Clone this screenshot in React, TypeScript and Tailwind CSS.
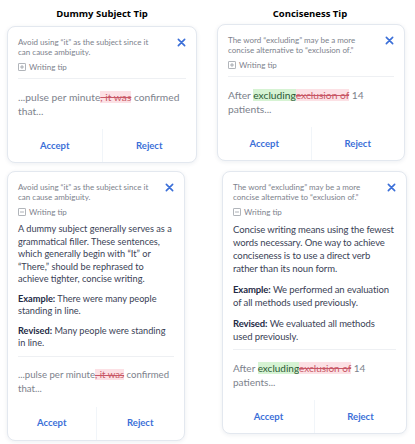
import React from 'react';

const font = { fontFamily: 'Lato, "Noto Sans", sans-serif' };

const CloseIcon: React.FC = () => (
    <svg viewBox="0 0 10 10" className="w-[9px] h-[9px] shrink-0 mt-[1px]" fill="none">
        <path d="M1.5 1.5 L8.5 8.5 M8.5 1.5 L1.5 8.5" stroke="#3b6fd8" strokeWidth="1.8" strokeLinecap="round" />
    </svg>
);

const TipBox: React.FC<{ open: boolean }> = ({ open }) => (
    <svg viewBox="0 0 9 9" className="w-[8px] h-[8px] shrink-0">
        <rect x="0.5" y="0.5" width="8" height="8" rx="0.8" fill="none" stroke="#8a8f98" strokeWidth="0.8" />
        <path d="M2.3 4.5 H6.7" stroke="#8a8f98" strokeWidth="0.8" />
        {!open && <path d="M4.5 2.3 V6.7" stroke="#8a8f98" strokeWidth="0.8" />}
    </svg>
);

const Buttons: React.FC = () => (
    <div className="flex h-[33px]">
        <button className="flex-1 text-[9.5px] font-bold text-[#3b6fd8] border-r border-slate-100">Accept</button>
        <button className="flex-1 text-[9.5px] font-bold text-[#3b6fd8]">Reject</button>
    </div>
);

const Del: React.FC<{ children: React.ReactNode }> = ({ children }) => (
    <span className="bg-[#fce1e5] text-[#c85766] line-through decoration-[#c85766]">{children}</span>
);

const Ins: React.FC<{ children: React.ReactNode }> = ({ children }) => (
    <span className="bg-[#d6f3d3] text-[#2a5a33]">{children}</span>
);

const TipCard: React.FC<{
    width: string;
    message: React.ReactNode;
    sentence: React.ReactNode;
    sentenceClass: string;
    detail?: React.ReactNode;
    detailClass?: string;
}> = ({ width, message, sentence, sentenceClass, detail, detailClass }) => (
    <div className={`${width} bg-white rounded-[8px] border border-[#e3e8ef] shadow-[0_1px_4px_rgba(30,50,90,0.08)]`}>
        <div className="px-[10px] pt-[10px]">
            <div className="flex items-start justify-between">
                <p className="max-w-[140px] text-[8px] leading-[10px] text-[#7d828c]">{message}</p>
                <CloseIcon />
            </div>
            <div className="flex items-center gap-[3px] mt-[5px] text-[8px] leading-[10px] text-[#7d828c]">
                <TipBox open={!!detail} />
                Writing tip
            </div>
            {detail && (
                <div className={`text-[#3a4256] ${detailClass}`}>
                    {detail}
                </div>
            )}
            <div className={`border-t border-[#eef0f3] mt-[6px] pt-[11px] pb-[11px] leading-[14px] text-[#7d828c] ${sentenceClass}`}>
                {sentence}
            </div>
        </div>
        <Buttons />
    </div>
);

const dummyMsg = <>Avoid using “it” as the subject since it can cause ambiguity.</>;
const dummySentence = <>...pulse per minute<Del>, it was</Del> confirmed that...</>;
const conciseMsg = <>The word “excluding” may be a more concise alternative to “exclusion of.”</>;
const conciseSentence = <>After <Ins>excluding</Ins><Del>exclusion of</Del> 14 patients...</>;

const titleFont = { fontFamily: '"Open Sans", sans-serif' };

const App: React.FC = () => {
    return (
        <div className="w-[415px] h-[444px] bg-white flex overflow-hidden" style={font}>
            {/* Left column */}
            <div className="w-[207px] flex flex-col">
                <h2 className="text-center text-[9.5px] font-bold text-black mt-[7px] ml-[-3px]" style={titleFont}>Dummy Subject Tip</h2>
                <div className="ml-[7px] mt-[5px]">
                    <TipCard width="w-[190px]" message={dummyMsg} sentence={dummySentence} sentenceClass="text-[10.25px]" />
                </div>
                <div className="ml-[7px] mt-[8px]">
                    <TipCard
                        width="w-[178px]"
                        message={dummyMsg}
                        sentence={dummySentence}
                        sentenceClass="text-[9.6px]"
                        detailClass="mt-[6px] text-[9.2px] leading-[12.5px] space-y-[7px]"
                        detail={
                            <>
                                <p>A dummy subject generally serves as a grammatical filler. These sentences, which generally begin with “It” or “There,” should be rephrased to achieve tighter, concise writing.</p>
                                <p><b className="text-[#1e2a45]">Example:</b> There were many people standing in line.</p>
                                <p><b className="text-[#1e2a45]">Revised:</b> Many people were standing in line.</p>
                            </>
                        }
                    />
                </div>
            </div>

            {/* Right column */}
            <div className="w-[208px] flex flex-col">
                <h2 className="text-center text-[9.5px] font-bold text-black mt-[7px] ml-[-2px]" style={titleFont}>Conciseness Tip</h2>
                <div className="ml-[10px] mt-[3px]">
                    <TipCard width="w-[188px]" message={conciseMsg} sentence={conciseSentence} sentenceClass="text-[10.25px]" />
                </div>
                <div className="ml-[15px] mt-[10px]">
                    <TipCard
                        width="w-[185px]"
                        message={conciseMsg}
                        sentence={conciseSentence}
                        sentenceClass="text-[10px]"
                        detailClass="mt-[6px] text-[9.5px] leading-[13px] tracking-[-0.1px] space-y-[8px]"
                        detail={
                            <>
                                <p>Concise writing means using the fewest words necessary. One way to achieve conciseness is to use a direct verb rather than its noun form.</p>
                                <p><b className="text-[#1e2a45]">Example:</b> We performed an evaluation of all methods used previously.</p>
                                <p><b className="text-[#1e2a45]">Revised:</b> We evaluated all methods used previously.</p>
                            </>
                        }
                    />
                </div>
            </div>
        </div>
    );
};

export default App;
